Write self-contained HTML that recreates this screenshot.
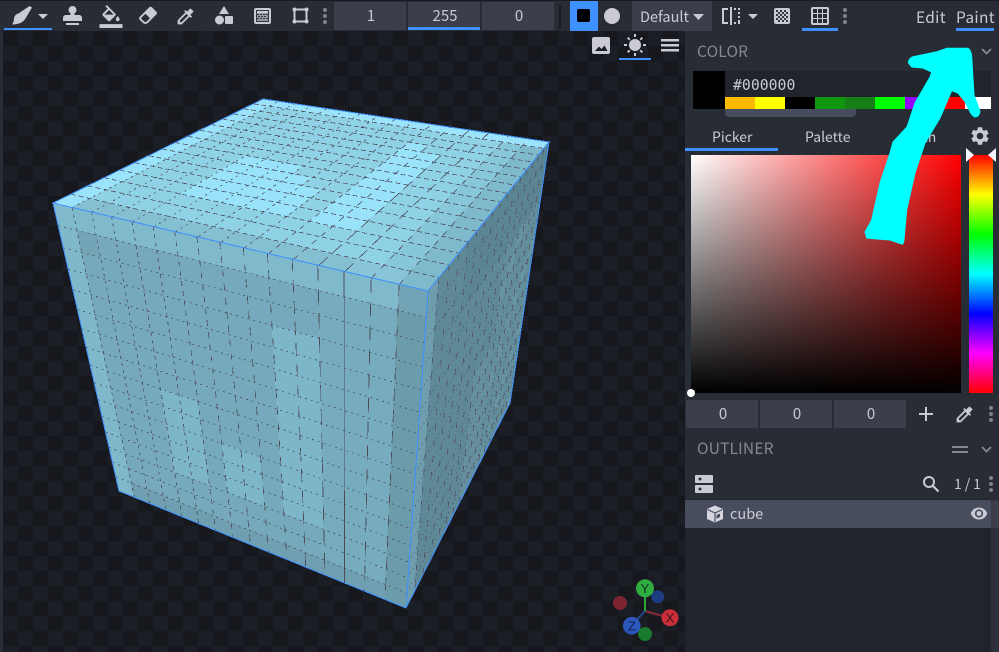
<!DOCTYPE html>
<html><head><meta charset="utf-8">
<style>
*{box-sizing:border-box}
html,body{margin:0;padding:0;width:999px;height:652px;overflow:hidden;background:#282c34}
body{position:relative;font-family:"Noto Sans CJK JP","Liberation Sans",sans-serif;color:#cacad4;font-size:15px}
.a{position:absolute}
.t{position:absolute;white-space:nowrap;line-height:20px}
svg.i{position:absolute;fill:#cacad4;overflow:visible}
.num{position:absolute;background:#3a3f4b;height:28px;width:72px;text-align:center;line-height:28px;font-size:15px;padding-left:2px}
.bl{position:absolute;background:#3e90ff}
.dots{position:absolute;width:4px}
.dots b{display:block;width:4px;height:4px;border-radius:2px;background:#7d8189;margin-bottom:2px}
</style></head><body>
<div class="a" style="left:0;top:0;width:999px;height:1px;background:#181a1f"></div>
<div class="a" id="vp" style="left:3px;top:31px;width:682px;height:621px;background:repeating-conic-gradient(#1b1e25 0 25%,#16181d 0 50%) 0 0/30px 30px"></div>
<svg class="a" id="cube" width="999" height="652" style="left:0;top:0" shape-rendering="crispEdges"></svg>

<!-- toolbar -->
<svg class="i" style="left:0;top:0" width="40" height="30" viewBox="0 0 40 30"><path d="M29.500 6L32 7.500 25.500 18.500Q22 24.500 12 24.500Q14 22 14 18Q15 14 18.500 13.500Z"/></svg>
<svg class="i" style="left:38px;top:14px" width="10" height="5" viewBox="0 0 10 5"><path d="M0 0h10L5 5z"/></svg>
<div class="bl" style="left:4px;top:28px;width:48px;height:2px"></div>
<svg class="i" style="left:62px;top:5px" width="21" height="21" viewBox="0 0 21 21"><path d="M10.500 1C8.300 1 6.500 2.800 6.500 5c0 1.500.8 2.700 2 3.400V10H4C2.300 10 1 11.300 1 13v3h19v-3c0-1.700-1.300-3-3-3h-4.500V8.400c1.200-.7 2-1.900 2-3.400 0-2.200-1.800-4-4-4zM4 18h13v2H4z"/></svg>
<svg class="i" style="left:99px;top:5px" width="24" height="23" viewBox="0 0 24 24"><path d="M16.560 8.940L7.620 0 6.210 1.410l2.380 2.380-5.150 5.150c-.59.59-.59 1.540 0 2.120l5.500 5.500c.29.29.68.44 1.060.44s.77-.15 1.060-.44l5.500-5.500c.59-.58.59-1.530 0-2.120zM5.210 10L10 5.210 14.790 10H5.210zM19 11.500s-2 2.170-2 3.500c0 1.100.9 2 2 2s2-.9 2-2c0-1.330-2-3.500-2-3.500zM0 20h24v4H0z"/></svg>
<svg class="i" style="left:137px;top:4px" width="22" height="22" viewBox="0 0 24 24"><path d="M16.240 3.560L21.190 8.500C21.970 9.290 21.970 10.550 21.190 11.340L12 20.530C10.440 22.090 7.910 22.090 6.340 20.530L2.810 17C2.030 16.210 2.030 14.950 2.810 14.160L13.410 3.560C14.200 2.780 15.460 2.780 16.240 3.560M4.220 15.580L7.760 19.110C8.540 19.900 9.800 19.900 10.590 19.110L14.120 15.580L9.170 10.630L4.220 15.580Z"/></svg>
<svg class="i" style="left:175px;top:6px" width="21" height="21" viewBox="0 0 24 24"><path d="M20.710 5.630l-2.340-2.340c-.39-.39-1.020-.39-1.410 0l-3.120 3.120-1.930-1.910-1.410 1.410 1.420 1.420L3 16.250V21h4.750l8.920-8.920 1.420 1.420 1.410-1.410-1.920-1.920 3.120-3.120c.4-.4.4-1.030.01-1.420zM6.920 19L5 17.080l8.060-8.060 1.920 1.920L6.920 19z"/></svg>
<svg class="i" style="left:214px;top:6px" width="20" height="19" viewBox="0 0 20 19"><path d="M10 0l-5 8h10z"/><circle cx="5.500" cy="14" r="4.500"/><rect x="11" y="10" width="8" height="8" rx="1"/></svg>
<svg class="i" style="left:254px;top:8px" width="17" height="16" viewBox="0 0 17 16"><rect x="0" y="0" width="17" height="16" rx="2"/><rect x="2" y="2" width="13" height="12" fill="#33373f"/><rect x="3" y="3" width="11" height="2"/><path d="M3 5h11v8H3z" fill="#9a9aa4"/><path d="M3 6h2v1H3zm3 0h2v1H6zm3 0h2v1H9zm3 0h2v1h-2zM4 8h2v1H4zm3 0h2v1H7zm3 0h2v1h-2zM3 10h2v1H3zm3 0h2v1H6zm3 0h2v1H9zm3 0h2v1h-2z" fill="#33373f"/></svg>
<svg class="i" style="left:292px;top:7px" width="17" height="17" viewBox="0 0 17 17"><rect x="2.500" y="2.500" width="12" height="12" fill="none" stroke="#cacad4" stroke-width="2"/><circle cx="2.500" cy="2.500" r="2"/><circle cx="14.500" cy="2.500" r="2"/><circle cx="2.500" cy="14.500" r="2"/><circle cx="14.500" cy="14.500" r="2"/></svg>
<div class="dots" style="left:323px;top:8px"><b></b><b></b><b></b></div>

<div class="num" style="left:334px;top:2px">1</div>
<div class="num" style="left:408px;top:2px">255</div>
<div class="bl" style="left:408px;top:27px;width:72px;height:3px"></div>
<div class="num" style="left:482px;top:2px">0</div>
<div class="a" style="left:559px;top:5px;width:2px;height:24px;background:#181a1f"></div>
<div class="bl" style="left:570px;top:1px;width:28px;height:30px"></div>
<div class="a" style="left:577px;top:9px;width:13px;height:13px;background:#000;border-radius:2px"></div>
<div class="a" style="left:604px;top:8px;width:16px;height:16px;background:#cacad4;border-radius:50%"></div>
<div class="a" style="left:632px;top:1px;width:80px;height:30px;background:#3a3f4b"></div>
<div class="t" style="left:640px;top:7px;font-size:14.500px">Default</div>
<svg class="i" style="left:693px;top:14px" width="11" height="6" viewBox="0 0 11 6"><path d="M0 0h11L5.500 6z"/></svg>
<svg class="i" style="left:722px;top:7px" width="18" height="18" viewBox="0 0 18 18"><path d="M0 1h6v2H2v12h4v2H0zM8 0h2v18H8z"/><path d="M12 1h2v2h-2zM16 1h2v2h-2zM16 5h2v2h-2zM16 9h2v2h-2zM16 13h2v2h-2zM16 15h2v2h-2zM12 15h2v2h-2z"/></svg>
<svg class="i" style="left:748px;top:14px" width="10" height="5" viewBox="0 0 10 5"><path d="M0 0h10L5 5z"/></svg>
<svg class="i" style="left:774px;top:8px" width="16" height="16" viewBox="0 0 16 16"><rect width="16" height="16" rx="2"/><path d="M2 2h2v2H2zM6 2h2v2H6zM10 2h2v2h-2zM4 4h2v2H4zM8 4h2v2H8zM12 4h2v2h-2zM2 6h2v2H2zM6 6h2v2H6zM10 6h2v2h-2zM4 8h2v2H4zM8 8h2v2H8zM12 8h2v2h-2zM2 10h2v2H2zM6 10h2v2H6zM10 10h2v2h-2zM4 12h2v2H4zM8 12h2v2H8zM12 12h2v2h-2z" fill="#33363f"/></svg>
<svg class="i" style="left:811px;top:7px" width="18" height="18" viewBox="0 0 18 18"><rect width="18" height="18" rx="2"/><path d="M2 2h4v4H2zM7 2h4v4H7zM12 2h4v4h-4zM2 7h4v4H2zM7 7h4v4H7zM12 7h4v4h-4zM2 12h4v4H2zM7 12h4v4H7zM12 12h4v4h-4z" fill="#282c34"/></svg>
<div class="bl" style="left:802px;top:28px;width:36px;height:3px"></div>
<div class="dots" style="left:843px;top:8px"><b></b><b></b><b></b></div>
<div class="t" style="left:916px;top:7px;font-size:15.500px;letter-spacing:.3px">Edit</div>
<div class="t" style="left:956px;top:7px;font-size:15.500px;letter-spacing:.3px">Paint</div>
<div class="bl" style="left:956px;top:28px;width:38px;height:3px"></div>

<!-- viewport icons -->
<svg class="i" style="left:592px;top:37px" width="18" height="17" viewBox="0 0 18 17"><rect width="18" height="17" rx="2"/><rect x="2" y="2" width="14" height="12" fill="#cacad4"/><path d="M3 14l4-4.500 2.500 2.500 3-3.500 3 5.500z" fill="#1b1e25"/></svg>
<svg class="i" style="left:624px;top:34px" width="22" height="22" viewBox="0 0 22 22"><circle cx="11" cy="11" r="6"/><path d="M10 0h2v3h-2zM10 19h2v3h-2zM0 10h3v2H0zM19 10h3v2h-3zM3 4.400L4.400 3l2 2L5 6.400zM15.600 17L17 15.600l2 2L17.600 19zM3 17.600l2-2L6.400 17l-2 2zM15.600 5l2-2L19 4.400l-2 2z"/></svg>
<div class="bl" style="left:619px;top:58px;width:32px;height:2px"></div>
<svg class="i" style="left:661px;top:39px" width="18" height="13" viewBox="0 0 18 13"><path d="M0 0h18v2.500H0zM0 5h18v2.500H0zM0 10h18v2.500H0z"/></svg>

<!-- gizmo -->
<svg class="a" style="left:600px;top:570px" width="85" height="80" viewBox="600 570 85 80">
<circle cx="657.700" cy="596.700" r="6.500" fill="#1c3d80"/><circle cx="620" cy="603" r="7" fill="#7a2530"/>
<circle cx="645" cy="634" r="7" fill="#1a7a2e"/>
<path d="M645 611L670 618" stroke="#8a2a34" stroke-width="2"/><path d="M645 611L632 625" stroke="#24498f" stroke-width="2"/><path d="M645 611V588" stroke="#2aa63c" stroke-width="2"/>
<circle cx="645" cy="588.300" r="9" fill="#2fad40"/><circle cx="670" cy="617.700" r="8.500" fill="#c92e3a"/><circle cx="631.700" cy="625.700" r="8.800" fill="#2c57bd"/>
<text x="645" y="593" font-size="13" text-anchor="middle" fill="#14331a" font-family="Liberation Sans,sans-serif">Y</text>
<text x="670" y="622.500" font-size="13" text-anchor="middle" fill="#3a1216" font-family="Liberation Sans,sans-serif">X</text>
<text x="632" y="630.500" font-size="13" text-anchor="middle" fill="#10204a" font-family="Liberation Sans,sans-serif">Z</text>
</svg>

<!-- panel -->
<div class="a" style="left:685px;top:31px;width:314px;height:621px;background:#282c34"></div>
<div class="t" style="left:697px;top:41px;font-size:15.500px;color:#848891;letter-spacing:.2px">COLOR</div>
<svg class="i" style="left:981px;top:48px" width="11" height="7" viewBox="0 0 11 7"><path d="M1 1l4.500 4.500L10 1" fill="none" stroke="#848891" stroke-width="1.800"/></svg>
<div class="a" style="left:693px;top:71px;width:32px;height:38px;background:#000"></div>
<div class="a" style="left:725px;top:71px;width:266px;height:26px;background:#21252b"></div>
<div class="t" style="left:733px;top:76px;font-family:'DejaVu Sans Mono','Liberation Mono',monospace;font-size:14.800px">#000000</div>
<div class="a" style="left:725px;top:97px;width:30px;height:12px;background:#ffb900"></div>
<div class="a" style="left:755px;top:97px;width:30px;height:12px;background:#ffff00"></div>
<div class="a" style="left:785px;top:97px;width:30px;height:12px;background:#000"></div>
<div class="a" style="left:815px;top:97px;width:30px;height:12px;background:#0f970f"></div>
<div class="a" style="left:845px;top:97px;width:30px;height:12px;background:#167f16"></div>
<div class="a" style="left:875px;top:97px;width:30px;height:12px;background:#00ff00"></div>
<div class="a" style="left:905px;top:97px;width:30px;height:12px;background:#9500ff"></div>
<div class="a" style="left:935px;top:97px;width:30px;height:12px;background:#ff0000"></div>
<div class="a" style="left:965px;top:97px;width:26px;height:12px;background:#fff"></div>
<div class="a" style="left:725px;top:109px;width:131px;height:8px;background:#474d5d;border-radius:0 0 4px 4px"></div>

<div class="t" style="left:712px;top:127px;font-size:14px">Picker</div>
<div class="t" style="left:805px;top:127px;font-size:14px">Palette</div>
<div class="t" style="left:905px;top:127px;font-size:14px">Both</div>
<div class="bl" style="left:685px;top:148px;width:93px;height:3px"></div>
<svg class="i" style="left:969px;top:125px" width="22" height="22" viewBox="0 0 24 24"><path d="M19.140 12.940c.04-.3.060-.61.060-.94 0-.32-.02-.64-.07-.94l2.030-1.580c.18-.14.230-.41.120-.61l-1.920-3.320c-.12-.22-.37-.29-.59-.22l-2.390.96c-.5-.38-1.030-.7-1.620-.94l-.36-2.540c-.04-.24-.24-.41-.48-.41h-3.840c-.24 0-.43.170-.47.410l-.36 2.540c-.59.24-1.130.57-1.620.94l-2.390-.96c-.22-.08-.47 0-.59.22L2.740 8.870c-.12.21-.08.47.12.61l2.030 1.580c-.05.3-.09.63-.09.94s.02.64.07.94l-2.030 1.580c-.18.14-.23.41-.12.61l1.920 3.320c.12.22.37.29.59.22l2.390-.96c.5.38 1.030.7 1.620.94l.36 2.540c.05.24.24.41.48.41h3.840c.24 0 .44-.17.47-.41l.36-2.540c.59-.24 1.130-.56 1.620-.94l2.390.96c.22.08.47 0 .59-.22l1.920-3.320c.12-.22.07-.47-.12-.61l-2.010-1.580zM12 15.600c-1.980 0-3.600-1.620-3.600-3.600s1.620-3.600 3.600-3.600 3.600 1.620 3.600 3.600-1.620 3.600-3.600 3.600z"/></svg>

<div class="a" style="left:691px;top:155px;width:270px;height:238px;background:linear-gradient(to top,#000,rgba(0,0,0,0)),linear-gradient(to right,#fff,#f00)"></div>
<div class="a" style="left:969px;top:155px;width:24px;height:238px;background:linear-gradient(to bottom,#f00 0%,#ff0 16.670%,#0f0 33.330%,#0ff 50%,#00f 66.670%,#f0f 83.330%,#f00 100%)"></div>
<svg class="a" style="left:966px;top:147px" width="30" height="16" viewBox="0 0 30 16"><path d="M0 1L8 8 0 15z" fill="#f5f5ff"/><path d="M30 1L22 8 30 15z" fill="#f5f5ff"/></svg>
<div class="a" style="left:687px;top:389px;width:8px;height:8px;border-radius:50%;background:#fff"></div>

<div class="num" style="left:686px;top:400px">0</div>
<div class="num" style="left:760px;top:400px">0</div>
<div class="num" style="left:834px;top:400px">0</div>
<svg class="i" style="left:919px;top:407px" width="14" height="14" viewBox="0 0 14 14"><path d="M6 0h2v14H6zM0 6h14v2H0z"/></svg>
<svg class="i" style="left:954px;top:404px" width="21" height="21" viewBox="0 0 24 24"><path d="M20.710 5.630l-2.340-2.340c-.39-.39-1.020-.39-1.410 0l-3.120 3.120-1.930-1.910-1.410 1.410 1.420 1.420L3 16.250V21h4.750l8.920-8.920 1.420 1.420 1.410-1.410-1.920-1.920 3.120-3.120c.4-.4.4-1.030.01-1.420zM6.920 19L5 17.080l8.060-8.060 1.920 1.920L6.920 19z"/></svg>
<div class="dots" style="left:989px;top:406px"><b></b><b></b><b></b></div>

<div class="t" style="left:697px;top:438px;font-size:15.500px;color:#848891;letter-spacing:.2px">OUTLINER</div>
<svg class="i" style="left:952px;top:446px" width="16" height="7" viewBox="0 0 16 7"><path d="M0 0h16v2H0zM0 5h16v2H0z" fill="#848891"/></svg>
<svg class="i" style="left:981px;top:446px" width="11" height="7" viewBox="0 0 11 7"><path d="M1 1l4.500 4.500L10 1" fill="none" stroke="#848891" stroke-width="1.800"/></svg>
<svg class="i" style="left:695px;top:475px" width="18" height="18" viewBox="0 0 18 18"><rect width="18" height="8" rx="1"/><rect y="10" width="18" height="8" rx="1"/><circle cx="5" cy="4" r="1.500" fill="#282c34"/><circle cx="5" cy="14" r="1.500" fill="#282c34"/></svg>
<svg class="i" style="left:922px;top:475px" width="18" height="18" viewBox="0 0 18 18"><circle cx="7" cy="7" r="5" fill="none" stroke="#cacad4" stroke-width="2"/><path d="M10.500 10.500L16.500 16.500" stroke="#cacad4" stroke-width="2.200"/></svg>
<div class="t" style="left:954px;top:474px;font-size:14px;letter-spacing:-.1px">1 / 1</div>
<div class="dots" style="left:989px;top:476px"><b></b><b></b><b></b></div>

<div class="a" style="left:685px;top:499px;width:306px;height:153px;background:#21252b"></div>
<div class="a" style="left:685px;top:500px;width:306px;height:28px;background:#474d5d"></div>
<div class="a" style="left:991px;top:500px;width:8px;height:152px;background:#2c3038"></div>
<div class="a" style="left:991px;top:500px;width:8px;height:28px;background:#3a3f4b;border-radius:4px 4px 0 0"></div>
<svg class="i" style="left:706px;top:505px" width="18" height="18" viewBox="0 0 18 18"><path d="M9 .5L17 4v10l-8 3.500L1 14V4z" fill="#d6d6de"/><path d="M1.500 4.500L9 8l7.500-3.500M9 8v9" fill="none" stroke="#474d5d" stroke-width="1.200"/><path d="M10.500 10l3.500-1.500V12l-3.500 1.700z" fill="#474d5d"/></svg>
<div class="t" style="left:730px;top:504px;font-size:14.500px">cube</div>
<svg class="i" style="left:970px;top:506px" width="18" height="15" viewBox="0 0 24 18"><path d="M12 1C7 1 2.700 4.100 1 9c1.700 4.900 6 8 11 8s9.300-3.100 11-8c-1.700-4.900-6-8-11-8zm0 13.500c-3 0-5.500-2.500-5.500-5.500S9 3.500 12 3.500s5.500 2.500 5.500 5.500-2.500 5.500-5.500 5.500z"/><circle cx="12" cy="9" r="3.300"/></svg>

<!-- cyan arrow -->
<svg class="a" style="left:0;top:0" width="999" height="652"><path fill="#00ffff" stroke="#00ffff" stroke-width="1" stroke-linejoin="round" d="M908.300 62.700Q909 58 913 56.700L937 51.700L946.700 48.300L968 48.300Q971 50 971.700 56.700L974 95L977 103L980 111.700Q979 117 975 117Q972 116 970 111.700L965 101.700L958 93L951.700 90.700L940 118L925 143L915 173L906.700 210L904 240Q903 245 901.700 244L890 240L876.700 239L866.700 238L865 232L871.700 220L880 183L890 153L893 142L907 127L915 103L930 77L931.700 72L923 68L911.700 67Z"/></svg>

<script>
(function(){
function H(p){var x0=p[0][0],y0=p[0][1],x1=p[1][0],y1=p[1][1],x2=p[2][0],y2=p[2][1],x3=p[3][0],y3=p[3][1];
var sx=x0-x1+x2-x3,sy=y0-y1+y2-y3,dx1=x1-x2,dx2=x3-x2,dy1=y1-y2,dy2=y3-y2,den=dx1*dy2-dx2*dy1;
var g=(sx*dy2-dx2*sy)/den,h=(dx1*sy-sx*dy1)/den,a=x1-x0+g*x1,b=x3-x0+h*x3,d=y1-y0+g*y1,e=y3-y0+h*y3;
return function(u,v){var w=g*u+h*v+1;return [(a*u+b*v+x0)/w,(d*u+e*v+y0)/w];};}
function inP(pt,poly){var c=false;for(var i=0,j=poly.length-1;i<poly.length;j=i++){var a=poly[i],b=poly[j];if((a[1]>pt[1])!=(b[1]>pt[1])&&pt[0]<(b[0]-a[0])*(pt[1]-a[1])/(b[1]-a[1])+a[0])c=!c;}return c;}
function z(o,s,l){return l.map(function(q){return [o[0]+q[0]/s,o[1]+q[1]/s];});}
var A=[53,203],B=[263,99],C=[549,142],D=[428,291],E=[119,491],F=[406,608],G=[510,403];
var out='',LC='#4d4a5a';
function pts(a){return a.map(function(q){return q[0].toFixed(1)+','+q[1].toFixed(1);}).join(' ');}
function face(m,colf){for(var i=0;i<16;i++)for(var j=0;j<16;j++){var c=colf(i,j,m((i+.5)/16,(j+.5)/16));
out+='<polygon points="'+pts([m(i/16,j/16),m((i+1)/16,j/16),m((i+1)/16,(j+1)/16),m(i/16,(j+1)/16)])+'" fill="'+c+'" stroke="'+c+'" stroke-width="1"/>';}}
function line(a,b,dash,col,w){out+='<line x1="'+a[0].toFixed(1)+'" y1="'+a[1].toFixed(1)+'" x2="'+b[0].toFixed(1)+'" y2="'+b[1].toFixed(1)+'" stroke="'+(col||LC)+'" stroke-width="'+(w||0.75)+'"'+(dash?' stroke-dasharray="'+dash+'"':'')+'/>';}

var mT=H([A,D,C,B]),mL=H([A,D,F,E]),mR=H([D,C,G,F]);
var o10=[50,95];
var tp=[z(o10,3,[[520,210],[610,170],[700,195],[800,280],[700,360],[590,340],[400,290]]),
        z(o10,3,[[1080,145],[1170,170],[1100,240],[1000,330],[940,400],[800,385],[860,320],[950,250],[1010,200]])];
face(mT,function(i,j,c){
 if(j==15||i==0)return '#9ae3fb';
 if(i==15)return '#7fbacc';
 if(j==0)return i>12?'#88c5d8':'#84bfd2';
 if(i==14)return '#88c7da';
 if(inP(c,tp[0])||inP(c,tp[1]))return '#98e2fa';
 if(i==13)return '#90d2e5';
 return '#8fd1e5';
});
var o9=[50,200];
var lp=[z(o9,3,[[668,375],[810,375],[825,990],[700,960]]),z(o9,3,[[335,575],[445,600],[470,840],[375,810]]),z(o9,3,[[518,735],[635,770],[645,915],[530,875]])];
face(mL,function(i,j,c){
 if(inP(c,lp[0])||inP(c,lp[1])||inP(c,lp[2]))return '#7db5c9';
 if(j==0)return i==15?'#72a4b5':'#80b9cc';
 if(i==0)return '#7fb8cb';
 if(i==15)return '#6c9caa';
 if(j==15)return '#6f9fb0';
 if(i>=12)return '#77acbf';
 if(i==1&&j==1)return '#73a5b6';
 return '#75a9bb';
});
face(mR,function(i,j){
 if(i==0)return '#6e9dad';
 if(j<3&&i>3)return '#5b8593';
 if(i>=10)return ((i+j)%5==0)?'#67959f':'#628d9a';
 if(i>=7&&j>7)return '#658f9c';
 return '#5f8997';
});

var lv={1:'3 4',2:'3 4',3:'3 4',4:'4 4',5:'4 4',6:'5 5',7:'6 6',8:'7 7',9:'8 8',10:'9 8',11:'13 8',12:'16 8',14:'15 9',15:'12 9'};
for(var k=1;k<16;k++){line(mL(0,k/16),mL(1,k/16),'2 4');line(mL(k/16,0),mL(k/16,1),lv[k]||'');}
var tv={1:'2 4',2:'2 4',3:'2 4',4:'2 4',5:'2 4',6:'2 4',7:'3 4',8:'3 4',9:'3 4',10:'5 5',11:'6 6',12:'12 7',13:'12 7',14:'6 7',15:'6 7'};
for(k=1;k<16;k++){line(mT(0,k/16),mT(1,k/16),'5 3');line(mT(k/16,0),mT(k/16,1),tv[k]);}
for(k=1;k<16;k++){line(mR(0,k/16),mR(1,k/16),'1 4');line(mR(k/16,0),mR(k/16,1),'6 10','#544f62');}
var bl='#3e90ff';
[[A,B],[B,C],[C,D],[A,D],[A,E],[E,F],[D,F],[C,G],[G,F]].forEach(function(s){line(s[0],s[1],'',bl,1);});
document.getElementById('cube').innerHTML=out;
})();
</script>
</body></html>
